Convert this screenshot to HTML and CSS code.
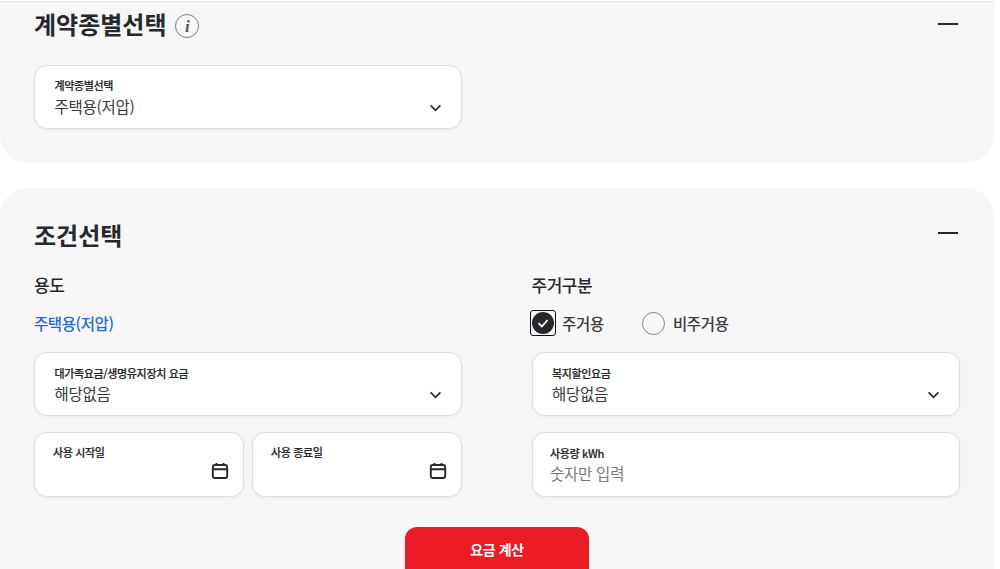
FILE: index.html
```html
<!DOCTYPE html>
<html lang="ko">
<head>
<meta charset="utf-8">
<title>요금 계산</title>
<link rel="stylesheet" href="styles.css">
</head>
<body>
<main class="page">
  <section class="card card-first">
    <header class="card-head head-first">
      <div class="title-wrap">
        <h2 class="title">계약종별선택</h2>
        <span class="info"><i>i</i></span>
      </div>
      <span class="minus"></span>
    </header>
    <div class="half">
      <div class="field">
        <div class="field-body"><span class="label">계약종별선택</span><span class="value">주택용(저압)</span></div>
        <svg class="chev" viewBox="0 0 14 9"><path d="M1.5 1.5 7 7l5.5-5.5"/></svg>
      </div>
    </div>
  </section>

  <section class="card card-second">
    <header class="card-head head-second">
      <h2 class="title">조건선택</h2>
      <span class="minus"></span>
    </header>
    <div class="columns">
      <div class="col">
        <h3 class="sub">용도</h3>
        <div class="row-line"><span class="blue">주택용(저압)</span></div>
        <div class="field">
          <div class="field-body"><span class="label">대가족요금/생명유지장치 요금</span><span class="value">해당없음</span></div>
          <svg class="chev" viewBox="0 0 14 9"><path d="M1.5 1.5 7 7l5.5-5.5"/></svg>
        </div>
        <div class="dates">
          <div class="field field-date">
            <span class="label">사용 시작일</span>
            <svg class="cal" viewBox="0 0 18 18"><rect x="1.8" y="3" width="14.4" height="13" rx="2"/><path d="M1.8 7.2h14.4M5.5 1v3M12.5 1v3"/></svg>
          </div>
          <div class="field field-date">
            <span class="label">사용 종료일</span>
            <svg class="cal" viewBox="0 0 18 18"><rect x="1.8" y="3" width="14.4" height="13" rx="2"/><path d="M1.8 7.2h14.4M5.5 1v3M12.5 1v3"/></svg>
          </div>
        </div>
      </div>
      <div class="col">
        <h3 class="sub">주거구분</h3>
        <div class="row-line radios">
          <label class="radio radio-on">
            <span class="focus"><svg class="tick" viewBox="0 0 22 22"><circle cx="11" cy="11" r="11"/><path d="M6.5 11.2 9.8 14.5 15.6 8"/></svg></span>
            <span class="radio-text">주거용</span>
          </label>
          <label class="radio radio-off">
            <span class="circle"></span>
            <span class="radio-text">비주거용</span>
          </label>
        </div>
        <div class="field">
          <div class="field-body"><span class="label">복지할인요금</span><span class="value">해당없음</span></div>
          <svg class="chev" viewBox="0 0 14 9"><path d="M1.5 1.5 7 7l5.5-5.5"/></svg>
        </div>
        <div class="field field-usage">
          <div class="field-body"><span class="label">사용량 kWh</span><span class="value placeholder">숫자만 입력</span></div>
        </div>
      </div>
    </div>
    <div class="actions"><button class="calc" type="button">요금 계산</button></div>
  </section>
</main>
</body>
</html>
```
FILE: styles.css
```css
* { box-sizing: border-box; }
html, body { margin: 0; padding: 0; height: 569px; overflow: hidden; background: #fff; }
body { font-family: "Noto Sans CJK KR", "Noto Sans", sans-serif; color: #26282c; }
.page { width: 1000px; padding-top: 1px; display: flex; flex-direction: column; gap: 25px; }
.card { width: 994px; background: #f7f7f8; padding: 0 34px 34px 34px; }
.card-first { height: 162px; border-top: 1px solid #e9eaea; border-radius: 0 0 28px 28px; }
.card-second { border-radius: 28px 28px 0 0; }
.card-head { display: flex; align-items: center; justify-content: space-between; }
.head-first { height: 44px; }
.head-second { height: 94px; }
.title-wrap { display: flex; align-items: center; gap: 9px; }
.title { margin: 0; font-size: 24px; line-height: 34px; font-weight: 700; letter-spacing: 0; color: #26282c; }
.info { width: 24px; height: 24px; border: 1px solid #77797c; border-radius: 50%; display: flex; align-items: center; justify-content: center; margin-top: 4px; }
.info i { font-family: "Liberation Serif", serif; font-size: 17px; line-height: 1; color: #55585c; font-weight: 700; }
.minus { width: 20px; height: 2px; margin-right: 2px; background: #26282c; }
.head-second .minus { margin-top: -4px; }
.half { width: 428px; margin-top: 19px; }
.half .value { margin-top: 1px; }
.columns { display: flex; gap: 69.5px; }
.col { width: 428px; min-width: 0; }
.sub { margin: 0; font-size: 17px; line-height: 24px; font-weight: 500; letter-spacing: -0.5px; height: 24px; margin-top: -9px; color: #26282c; }
.row-line { height: 30px; margin-top: 11px; margin-bottom: 14px; display: flex; align-items: center; }
.blue { font-size: 15.5px; font-weight: 500; color: #1c6bd0; letter-spacing: -0.4px; }
.field { height: 64px; background: #fff; border: 1.5px solid #dcdfe0; border-radius: 13px; box-shadow: 0 1px 3px rgba(0, 0, 0, .05); display: flex; align-items: center; justify-content: space-between; padding: 0 19px 0 19.5px; }
.field-body { display: flex; flex-direction: column; padding-top: 1px; }
.label { font-size: 11px; line-height: 16px; font-weight: 500; letter-spacing: -0.35px; color: #26282c; -webkit-text-stroke: 0.2px #26282c; }
.value { font-size: 15.5px; line-height: 24px; letter-spacing: -0.25px; color: #36383c; margin-top: 0; }
.placeholder { color: #77797d; }
.chev { width: 13px; height: 8px; fill: none; stroke: #26282c; stroke-width: 1.9; margin: 22px 0 0; }
.dates { display: flex; gap: 8px; margin-top: 16px; }
.field-date { flex: 1; height: 65px; align-items: flex-start; padding: 11px 14px 0 18px; }
.cal { width: 18px; height: 18px; fill: none; stroke: #26282c; stroke-width: 1.9; margin-top: 18px; }
.field-usage { height: 65px; margin-top: 16px; padding-left: 17.5px; }
.radios { gap: 38px; }
.radio { display: flex; align-items: center; gap: 6px; }
.radio-off { gap: 8px; }
.radio-text { font-size: 15.5px; font-weight: 500; letter-spacing: -0.3px; color: #3a3c40; }
.focus { width: 26px; height: 26px; border: 1.5px solid #111; border-radius: 3px; display: flex; align-items: center; justify-content: center; margin-left: -1.5px; }
.tick { width: 22px; height: 22px; }
.tick circle { fill: #26282c; }
.tick path { fill: none; stroke: #fff; stroke-width: 1.8; }
.circle { width: 23px; height: 23px; border: 1.7px solid #808285; border-radius: 50%; background: transparent; }
.actions { display: flex; justify-content: center; margin-top: 30px; }
.calc { width: 184px; height: 54px; border: 0; border-radius: 12px; background: #ec1c24; color: #fff; font-family: inherit; font-size: 14px; font-weight: 700; letter-spacing: -0.4px; padding: 0 0 10px; }
```
